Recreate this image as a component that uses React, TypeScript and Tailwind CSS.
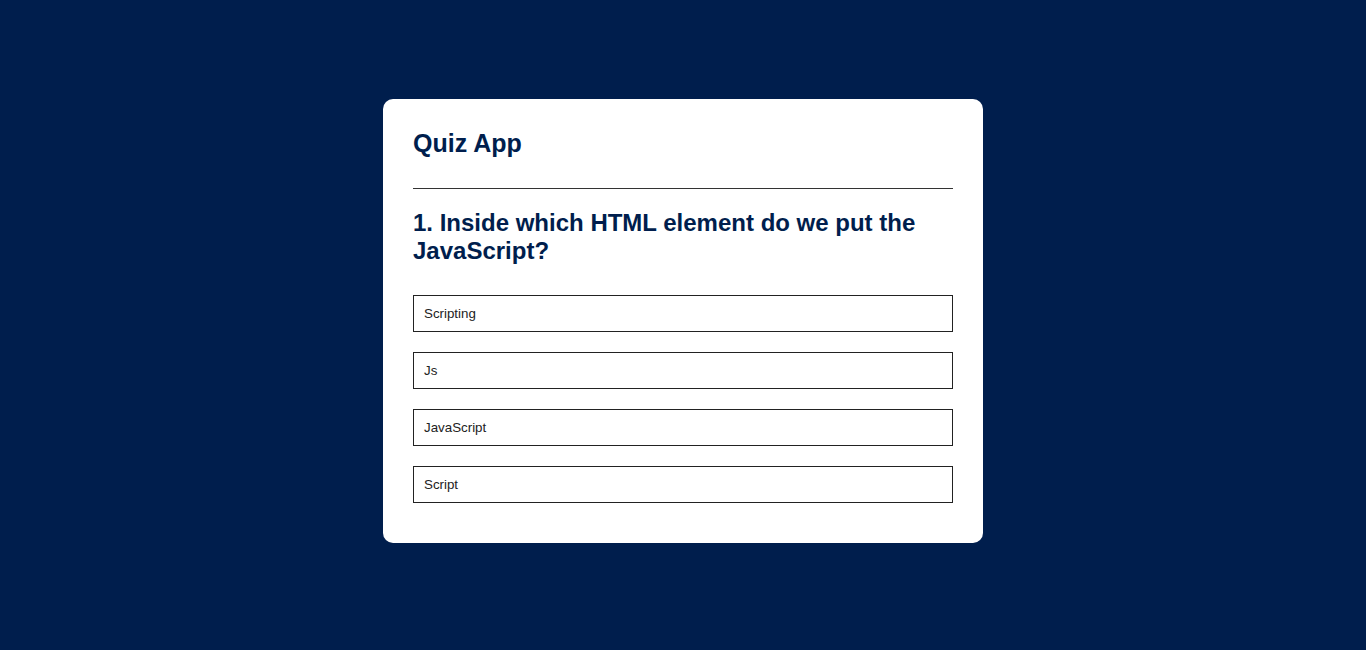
import { useState } from 'react'

export default function App() {
  const [selected, setSelected] = useState<number | null>(null)

  const question = '1. Inside which HTML element do we put the JavaScript?'
  const answers = ['Scripting', 'Js', 'JavaScript', 'Script']

  return (
    <div className="min-h-[650px] bg-[#001e4d] pt-[99px] font-['Liberation_Sans',Arial,sans-serif]">
      <div className="mx-auto w-[600px] rounded-[10px] bg-white px-[30px] pt-[30px] pb-[40px]">
        <h1 className="border-b border-[#333] pb-[30px] text-[25px] leading-[29px] font-bold text-[#001e4d]">
          Quiz App
        </h1>

        <div className="pt-[20px]">
          <h2 className="text-[24px] leading-[28px] font-bold text-[#001e4d]">{question}</h2>

          <div className="mt-[30px] flex flex-col gap-[20px]">
            {answers.map((answer, index) => (
              <button
                key={answer}
                onClick={() => setSelected(index)}
                className={`w-full border border-[#222] bg-white px-[10px] py-[10px] text-left text-[13.333px] leading-[15px] text-[#222] ${
                  selected === index ? 'bg-[#f3f4f6]' : ''
                }`}
              >
                {answer}
              </button>
            ))}
          </div>
        </div>
      </div>
    </div>
  )
}
